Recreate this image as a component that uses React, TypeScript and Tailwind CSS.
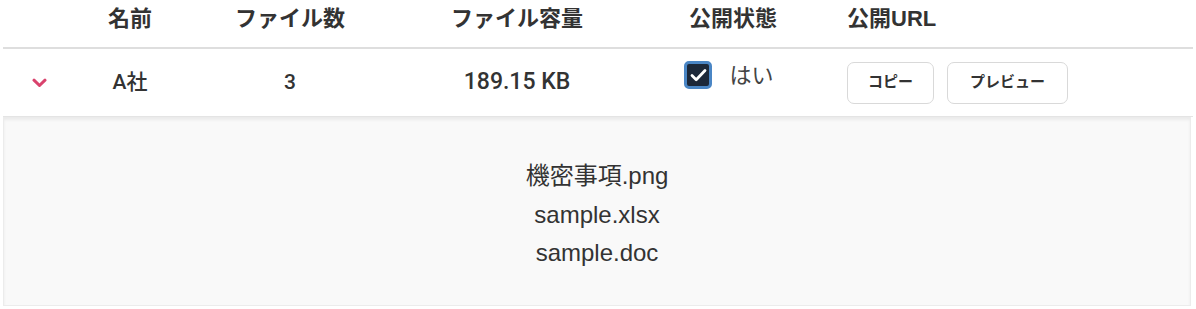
const files = ['機密事項.png', 'sample.xlsx', 'sample.doc']

const font = { fontFamily: '"Liberation Sans", "Noto Sans CJK JP", sans-serif' }
const cellFont = { fontFamily: 'Roboto, "Noto Sans CJK JP", sans-serif' }

export default function App() {
  return (
    <div className="w-[1196px] h-[309px] bg-white text-[#333]" style={font}>
      <div className="ml-[3px] mr-[3px]">
        {/* header */}
        <div className="flex h-[49px] pt-[2px] text-[22px] font-bold border-b-[2px] border-[#dedede]">
          <div className="w-[70px]" />
          <div className="w-[114px] text-center">名前</div>
          <div className="w-[206px] text-center">ファイル数</div>
          <div className="w-[248px] text-center">ファイル容量</div>
          <div className="w-[184px] text-center">公開状態</div>
          <div className="flex-1 pl-[22px]">公開URL</div>
        </div>

        {/* row */}
        <div className="flex items-center h-[68px] border-b border-[#e4e4e4] text-[21px]" style={cellFont}>
          <div className="w-[70px] flex justify-center pl-[2px]">
            <svg width="15" height="10" viewBox="0 0 15 10" fill="none">
              <path d="M2 2.2l5.5 5.3 5.5-5.3" stroke="#d9436d" strokeWidth="3" strokeLinecap="round" strokeLinejoin="round" />
            </svg>
          </div>
          <div className="w-[114px] text-center font-medium">A社</div>
          <div className="w-[206px] text-center font-medium">3</div>
          <div className="w-[248px] text-center font-medium text-[23px]">189.15 KB</div>
          <div className="w-[184px] flex justify-center -mt-[15px]">
            <div className="flex items-center gap-[17px] pr-[8px]">
              <span className="w-[28px] h-[28px] rounded-[5px] bg-[#1c2839] border-[3px] border-[#4a86c5] flex items-center justify-center">
                <svg width="17" height="14" viewBox="0 0 17 14" fill="none">
                  <path d="M2 7.5l4.2 4.2L15 2.5" stroke="#fff" strokeWidth="2.8" strokeLinecap="round" strokeLinejoin="round" />
                </svg>
              </span>
              <span className="text-[22px] text-[#444] font-normal" style={font}>はい</span>
            </div>
          </div>
          <div className="flex-1 pl-[22px] flex gap-[13px]" style={font}>
            <button className="w-[87px] h-[42px] rounded-[7px] border border-[#d9d9d9] bg-white text-[15px] font-semibold text-[#333]">コピー</button>
            <button className="w-[121px] h-[42px] rounded-[7px] border border-[#d9d9d9] bg-white text-[15px] font-semibold text-[#333]">プレビュー</button>
          </div>
        </div>

        {/* expanded panel */}
        <div className="h-[189px] mr-[2px] bg-[#f9f9f9] border-l border-r border-b border-[#ececec] shadow-[inset_0_3px_3px_rgba(0,0,0,0.06)] pt-[40px] flex flex-col items-center text-[24px] text-[#333] leading-[38.5px]">
          {files.map((f) => (
            <div key={f}>{f}</div>
          ))}
        </div>
      </div>
    </div>
  )
}
